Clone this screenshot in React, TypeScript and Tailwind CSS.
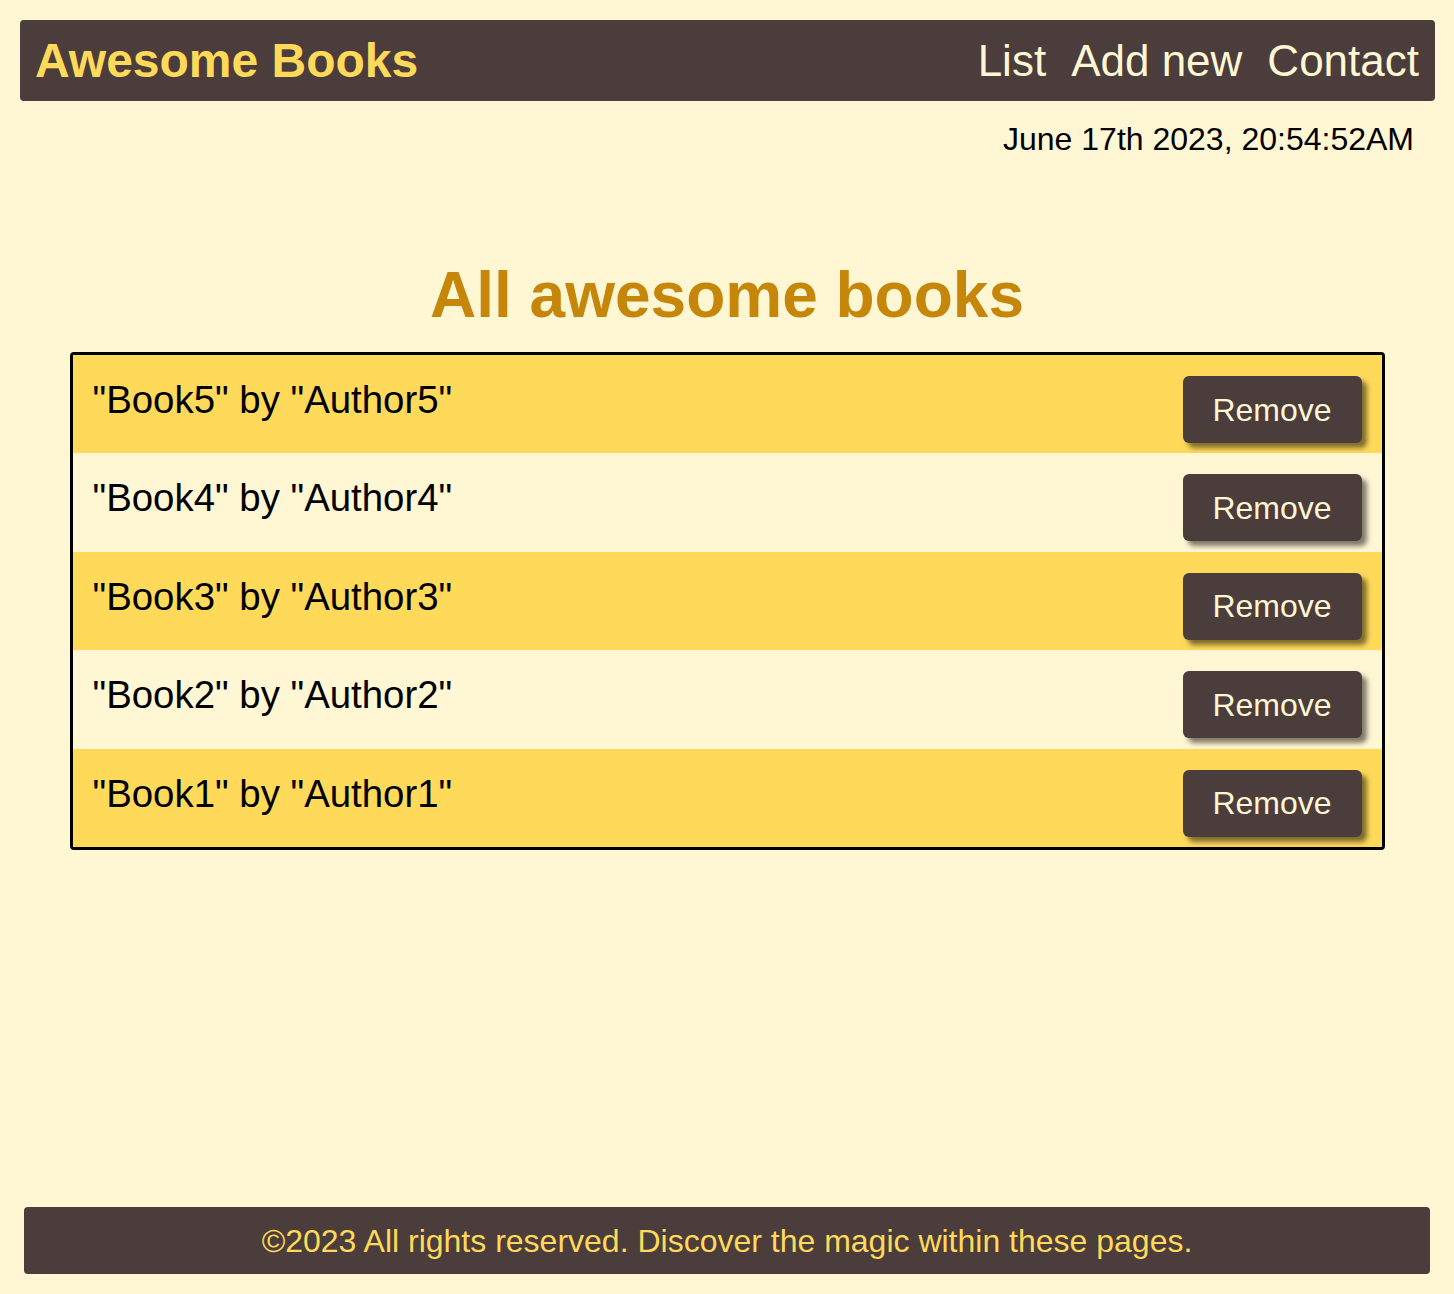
import React from "react";

const books = [5, 4, 3, 2, 1];

export default function App() {
  return (
    <div
      className="min-h-screen flex flex-col bg-[#fff6d4] text-black"
      style={{ fontFamily: '"Liberation Sans", Arial, sans-serif' }}
    >
      <header className="mt-5 ml-5 mr-[19px] h-[81px] rounded bg-[#4a3d3c] flex items-center justify-between pl-[15px] pr-4">
        <h1 className="text-[48px] font-bold text-[#ffd95a] leading-none">Awesome Books</h1>
        <nav className="flex gap-[25px] text-[44px] text-[#fff6d4] leading-none">
          <a>List</a>
          <a>Add new</a>
          <a>Contact</a>
        </nav>
      </header>
      <div className="flex justify-end pr-10 mt-[22px]">
        <p className="text-[32px] leading-none">June 17th 2023, 20:54:52AM</p>
      </div>
      <main className="flex flex-col items-center">
        <h2 className="mt-[108px] text-[64px] font-bold text-[#c5860a] leading-none">All awesome books</h2>
        <ul className="mt-[25px] w-[1315px] border-[3px] border-black rounded">
          {books.map((n, i) => (
            <li
              key={n}
              className={`h-[98.4px] flex items-start justify-between pl-5 pr-5 pt-[21px] ${
                i % 2 === 0 ? "bg-[#ffd95a]" : "bg-[#fff6d4]"
              }`}
            >
              <p className="text-[38.4px] leading-none mt-[5px]">"Book{n}" by "Author{n}"</p>
              <button className="w-[179px] h-[67px] rounded-md bg-[#4a3d3c] text-[#fff6d4] text-[32px] shadow-[5px_5px_5px_rgba(0,0,0,0.5)]">
                Remove
              </button>
            </li>
          ))}
        </ul>
      </main>
      <footer className="mt-auto mb-5 mx-6 h-[67px] rounded bg-[#4a3d3c] flex items-center justify-center">
        <p className="text-[32px] text-[#ffd95a] leading-none">
          ©2023 All rights reserved. Discover the magic within these pages.
        </p>
      </footer>
    </div>
  );
}
